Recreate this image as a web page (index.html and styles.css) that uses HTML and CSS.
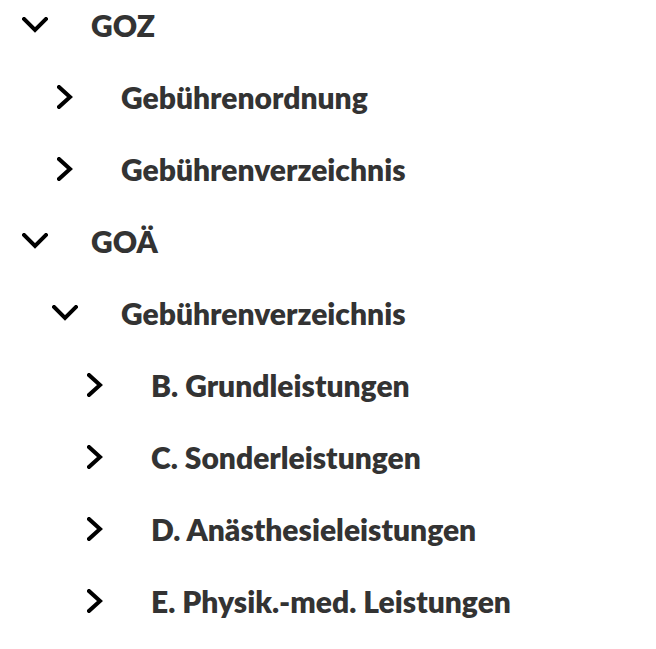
FILE: index.html
```html
<!DOCTYPE html>
<html lang="de">
<head>
<meta charset="utf-8">
<link rel="stylesheet" href="styles.css">
</head>
<body>
<ul class="tree">
  <li class="row lvl0"><span class="ico"><svg viewBox="0 0 26 16" class="down"><polyline points="2,2 13,13 24,2"/></svg></span><span class="label">GOZ</span></li>
  <li class="row lvl1"><span class="ico"><svg viewBox="0 0 16 24" class="right"><polyline points="2,2 13,12 2,22"/></svg></span><span class="label">Gebührenordnung</span></li>
  <li class="row lvl1"><span class="ico"><svg viewBox="0 0 16 24" class="right"><polyline points="2,2 13,12 2,22"/></svg></span><span class="label">Gebührenverzeichnis</span></li>
  <li class="row lvl0"><span class="ico"><svg viewBox="0 0 26 16" class="down"><polyline points="2,2 13,13 24,2"/></svg></span><span class="label">GOÄ</span></li>
  <li class="row lvl1"><span class="ico"><svg viewBox="0 0 26 16" class="down"><polyline points="2,2 13,13 24,2"/></svg></span><span class="label">Gebührenverzeichnis</span></li>
  <li class="row lvl2"><span class="ico"><svg viewBox="0 0 16 24" class="right"><polyline points="2,2 13,12 2,22"/></svg></span><span class="label">B. Grundleistungen</span></li>
  <li class="row lvl2"><span class="ico"><svg viewBox="0 0 16 24" class="right"><polyline points="2,2 13,12 2,22"/></svg></span><span class="label">C. Sonderleistungen</span></li>
  <li class="row lvl2"><span class="ico"><svg viewBox="0 0 16 24" class="right"><polyline points="2,2 13,12 2,22"/></svg></span><span class="label">D. Anästhesieleistungen</span></li>
  <li class="row lvl2"><span class="ico"><svg viewBox="0 0 16 24" class="right"><polyline points="2,2 13,12 2,22"/></svg></span><span class="label">E. Physik.-med. Leistungen</span></li>
</ul>
</body>
</html>
```
FILE: styles.css
```css
html, body {
  margin: 0;
  padding: 0;
  background: #ffffff;
}
.tree {
  list-style: none;
  margin: 0;
  padding: 0;
  display: flex;
  flex-direction: column;
  gap: 22px;
  font-family: Lato, "Noto Sans", sans-serif;
  font-weight: 800;
  font-size: 30px;
  color: #333333;
}
.row {
  height: 50px;
  display: flex;
  align-items: center;
}
.lvl0 { padding-left: 11px; }
.lvl1 { padding-left: 41px; }
.lvl2 { padding-left: 71px; }
.ico {
  width: 48px;
  height: 48px;
  flex: none;
  display: flex;
  align-items: center;
  justify-content: center;
  margin-right: 32px;
}
.ico svg {
  fill: none;
  stroke: #000000;
  stroke-width: 4;
  stroke-linecap: square;
  stroke-linejoin: miter;
}
.ico .down { width: 26px; height: 16px; }
.ico .right { width: 16px; height: 24px; }
.label {
  line-height: 1;
  white-space: nowrap;
}
```
